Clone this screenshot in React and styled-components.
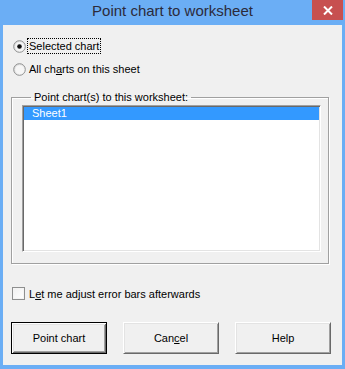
import React from "react";
import styled, { createGlobalStyle } from "styled-components";

const Global = createGlobalStyle`
  html, body { margin: 0; padding: 0; background: #6baef5; }
  body { font-family: "Liberation Sans", Arial, sans-serif; font-size: 11px; color: #000; }
`;

const Frame = styled.div`
  width: 345px;
  height: 369px;
  background: #6baef5;
  display: flex;
  flex-direction: column;
  box-sizing: border-box;
`;

const TitleBar = styled.div`
  height: 25px;
  display: grid;
  grid-template-columns: 1fr auto 1fr;
  align-items: start;
`;

const Title = styled.div`
  grid-column: 2;
  font-family: "Liberation Sans", Arial, sans-serif;
  font-size: 15px;
  line-height: 22px;
  color: #2b2b3b;
  white-space: nowrap;
`;

const CloseButton = styled.div`
  grid-column: 3;
  justify-self: end;
  width: 31px;
  height: 20px;
  margin-right: 2px;
  background: #c75050;
  display: flex;
  align-items: center;
  justify-content: center;
`;

const Client = styled.div`
  flex: 1;
  margin: 0 3px 4px 3px;
  background: #f0f0f0;
  display: flex;
  flex-direction: column;
  padding-top: 13px;
  box-sizing: border-box;
`;

const RadioRow = styled.div`
  display: flex;
  align-items: center;
  height: 16px;
  padding-left: 10px;
  margin-top: ${(p) => p.$gap || 0}px;
`;

const RadioLabel = styled.span`
  margin-left: 1px;
  padding: 0 1px;
  line-height: 14px;
  border: 1px ${(p) => (p.$focus ? "dotted #000" : "solid transparent")};
  white-space: nowrap;
`;

const Group = styled.fieldset`
  margin: 14px 0 0 8px;
  width: 318px;
  box-sizing: border-box;
  border: 1px solid #a0a0a0;
  box-shadow: 1px 1px 0 #fff, inset 1px 1px 0 #fff;
  padding: 1px 7px 11px 10px;
  min-width: 0;
`;

const Legend = styled.legend`
  margin-left: 9px;
  padding: 0 3px;
  line-height: 13px;
  font-size: 11px;
`;

const ListBox = styled.div`
  height: 147px;
  background: #fff;
  box-sizing: border-box;
  border-style: solid;
  border-width: 1px;
  border-color: #a0a0a0 #fff #fff #a0a0a0;
  box-shadow: inset 1px 1px 0 #696969, inset -1px -1px 0 #e3e3e3;
  padding: 1px;
`;

const ListItem = styled.div`
  height: 13px;
  line-height: 13px;
  padding-left: 8px;
  background: ${(p) => (p.$selected ? "#3399ff" : "transparent")};
  color: ${(p) => (p.$selected ? "#fff" : "#000")};
`;

const CheckRow = styled.div`
  display: flex;
  align-items: center;
  height: 13px;
  margin-top: 23px;
  padding-left: 9px;
  gap: 4px;
`;

const CheckBox = styled.span`
  width: 13px;
  height: 13px;
  box-sizing: border-box;
  border: 1px solid #8e8f8f;
  background: linear-gradient(135deg, #f0f0f0, #ffffff);
  box-shadow: inset 0 0 0 1px #f4f4f4;
`;

const ButtonRow = styled.div`
  display: flex;
  gap: 16px;
  margin-top: 22px;
  padding-left: 8px;
`;

const Button = styled.div`
  width: 96px;
  height: 32px;
  box-sizing: border-box;
  display: flex;
  align-items: center;
  justify-content: center;
  background: #f0f0f0;
  border: 1px solid;
  border-color: ${(p) => (p.$default ? "#000" : "#fff #696969 #696969 #fff")};
  box-shadow: ${(p) =>
    p.$default
      ? "inset 1px 1px 0 #fff, inset -1px -1px 0 #696969, inset 2px 2px 0 #e3e3e3, inset -2px -2px 0 #a0a0a0"
      : "inset 1px 1px 0 #e3e3e3, inset -1px -1px 0 #a0a0a0"};
  font-size: 11px;
`;

const Radio = ({ checked }) => (
  <svg width="13" height="13" viewBox="0 0 13 13">
    <defs>
      <linearGradient id={checked ? "rg1" : "rg2"} x1="0" y1="0" x2="1" y2="1">
        <stop offset="0" stopColor="#d8d8d8" />
        <stop offset="1" stopColor="#ffffff" />
      </linearGradient>
    </defs>
    <circle cx="6.5" cy="6.5" r="5.8" fill={`url(#${checked ? "rg1" : "rg2"})`} stroke="#8e8f8f" strokeWidth="1" />
    <circle cx="6.5" cy="6.5" r="4.2" fill="#f6f6f6" />
    {checked && <circle cx="6.5" cy="6.5" r="2.3" fill="#111" />}
  </svg>
);

export default function App() {
  return (
    <>
      <Global />
      <Frame>
        <TitleBar>
          <Title>Point chart to worksheet</Title>
          <CloseButton>
            <svg width="10" height="9" viewBox="0 0 10 9">
              <path d="M1 0.5 L9 8.5 M9 0.5 L1 8.5" stroke="#fff" strokeWidth="2" />
            </svg>
          </CloseButton>
        </TitleBar>
        <Client>
          <RadioRow>
            <Radio checked />
            <RadioLabel $focus>Selected chart</RadioLabel>
          </RadioRow>
          <RadioRow $gap={7}>
            <Radio />
            <RadioLabel>
              All ch<u>a</u>rts on this sheet
            </RadioLabel>
          </RadioRow>
          <Group>
            <Legend>Point chart(s) to this worksheet:</Legend>
            <ListBox>
              <ListItem $selected>Sheet1</ListItem>
            </ListBox>
          </Group>
          <CheckRow>
            <CheckBox />
            <span>
              L<u>e</u>t me adjust error bars afterwards
            </span>
          </CheckRow>
          <ButtonRow>
            <Button $default>Point chart</Button>
            <Button>
              Can<u>c</u>el
            </Button>
            <Button>Help</Button>
          </ButtonRow>
        </Client>
      </Frame>
    </>
  );
}
